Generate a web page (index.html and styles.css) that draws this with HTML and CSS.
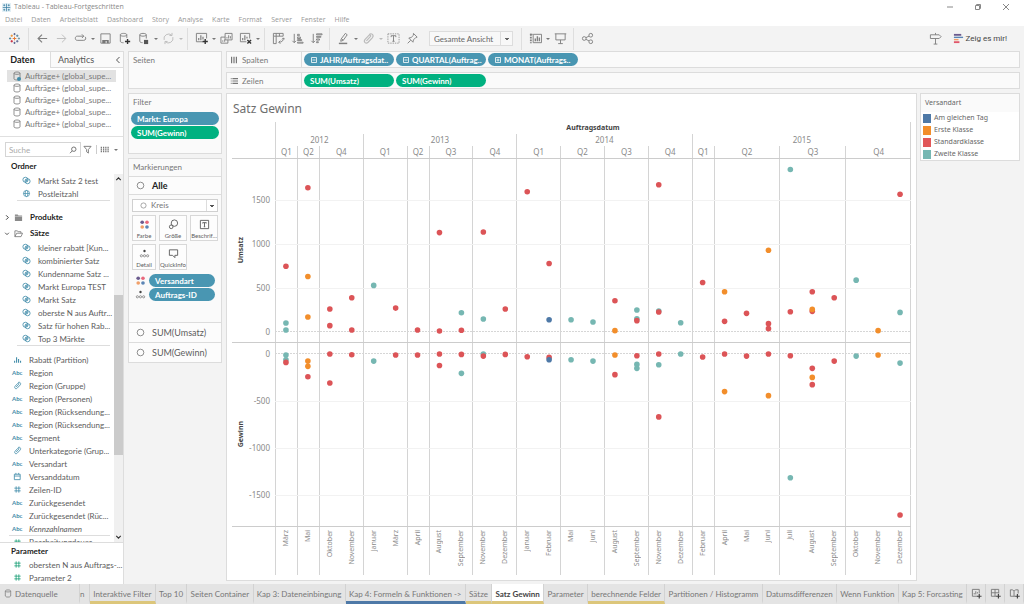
FILE: index.html
```html
<!DOCTYPE html>
<html lang="de">
<head>
<meta charset="utf-8">
<title>Tableau - Tableau-Fortgeschritten</title>
<link rel="stylesheet" href="styles.css">
</head>
<body>
<svg class="defs" aria-hidden="true">
  <symbol id="logo" viewBox="0 0 12 12"><g fill="none" stroke-width="1"><path stroke="#e8762d" d="M6 4v4M4 6h4"/><path stroke="#5b6591" d="M6 0v2.4M4.8 1.2h2.4M6 9.6V12M4.8 10.8h2.4"/><path stroke="#c72037" d="M3 7.7v2.6M1.7 9h2.6"/><path stroke="#59879b" d="M9 1.7v2.6M7.7 3h2.6M0 6h2.4M1.2 4.8v2.4"/><path stroke="#eb912c" d="M3 1.7v2.6M1.7 3h2.6"/><path stroke="#5c6692" d="M9 7.7v2.6M7.7 9h2.6"/><path stroke="#7199a6" d="M9.6 6H12M10.8 4.8v2.4"/></g></symbol>
  <symbol id="applogo" viewBox="0 0 12 12"><path fill="#e3f0f6" d="M0 0h12v12H0z"/><path fill="none" stroke="#3a7fa3" stroke-width="1" d="M6 1v10M1 6h10M3 1.700v2.600M1.700 3h2.600M9 1.700v2.600M7.700 3h2.600M3 7.700v2.600M1.700 9h2.600M9 7.700v2.600M7.700 9h2.600"/></symbol>
  <symbol id="cyl" viewBox="0 0 8 10"><path fill="none" stroke="currentColor" stroke-width=".8" d="M1 2.2c0-1.6 6-1.6 6 0v5.6c0 1.6-6 1.6-6 0zM1 2.2c0 1.5 6 1.5 6 0"/></symbol>
  <symbol id="cylon" viewBox="0 0 8 10"><path fill="none" stroke="currentColor" stroke-width=".8" d="M1 2.200c0-1.600 6-1.600 6 0v5.600c0 1.600-6 1.600-6 0zM1 2.200c0 1.500 6 1.500 6 0"/><circle cx="6" cy="8" r="2" fill="#3f8ba8"/></symbol>
  <symbol id="set" viewBox="0 0 10 10"><g fill="none" stroke="#3f8ba8" stroke-width=".9"><circle cx="3.8" cy="4.2" r="2.8"/><circle cx="6.2" cy="5.8" r="2.8"/><path d="M4 4l2 2M5 3.4l1.6 1.6M3.6 5.2l1.4 1.4"/></g></symbol>
  <symbol id="globe" viewBox="0 0 10 10"><g fill="none" stroke="#3f8ba8" stroke-width=".8"><circle cx="5" cy="5" r="3.4"/><ellipse cx="5" cy="5" rx="1.5" ry="3.4"/><path d="M1.6 5h6.8"/></g></symbol>
  <symbol id="clip" viewBox="0 0 10 10"><path fill="none" stroke="currentColor" stroke-width=".9" d="M3.4 6.8l3-3.2c.8-.8-.3-1.8-1.1-1L2.4 5.7C.8 7.6 3 9.6 4.7 7.900l3.200-3.400C9.600 2.600 7.300.2 5.500 2"/></symbol>
  <symbol id="cal" viewBox="0 0 10 10"><path fill="none" stroke="#3f8ba8" stroke-width=".9" d="M1.500 2.500h6.500v6H1.500zM1.500 4.500h6.500M3.200 1v1.500M6.300 1v1.500"/></symbol>
  <symbol id="hash" viewBox="0 0 10 10"><path fill="none" stroke="currentColor" stroke-width=".9" d="M3.500 1.500v7M6.500 1.500v7M1.500 3.500h7M1.500 6.500h7"/></symbol>
  <symbol id="bins" viewBox="0 0 10 10"><path fill="none" stroke="#3f8ba8" stroke-width="1.200" d="M1.800 6.500v2M4 2.500v6M6.200 4.500v4M8.400 6.500v2"/></symbol>
  <symbol id="folder" viewBox="0 0 10 10"><path fill="#8a8a8a" d="M1 1.800h3l1 1h4V9H1z"/><path stroke="#fff" stroke-width=".5" d="M1 3.700h8"/></symbol>
  <symbol id="folderopen" viewBox="0 0 10 10"><path fill="none" stroke="#777" stroke-width=".9" d="M1 8.500V2h2.500l1 1h3.200v1.700M1 8.500l2-3.800h6.500L7.800 8.500z"/></symbol>
  <symbol id="colors" viewBox="0 0 12 12"><circle cx="3.500" cy="3.500" r="2" fill="#6b5b8e"/><circle cx="8.700" cy="3.500" r="2" fill="#e8687c"/><circle cx="3.500" cy="8.700" r="2" fill="#f0a06a"/><circle cx="8.700" cy="8.700" r="2" fill="#5b85b5"/></symbol>
  <symbol id="detail" viewBox="0 0 12 12"><circle cx="6" cy="3.300" r="1.300" fill="#444"/><g fill="none" stroke="#666" stroke-width=".7"><circle cx="2.600" cy="8.500" r="1.200"/><circle cx="6" cy="8.500" r="1.200"/><circle cx="9.400" cy="8.500" r="1.200"/></g></symbol>
  <symbol id="ring" viewBox="0 0 10 10"><circle cx="5" cy="5" r="3.700" fill="none" stroke="#777" stroke-width=".9"/></symbol>
  <symbol id="plusbox" viewBox="0 0 8 8"><path fill="none" stroke="#fff" stroke-width=".8" d="M1.500 1.500h5v5h-5zM2.500 4h3M4 2.500v3"/></symbol>
  <symbol id="minusbox" viewBox="0 0 8 8"><path fill="none" stroke="#fff" stroke-width=".8" d="M1.500 1.500h5v5h-5zM2.500 4h3"/></symbol>
</svg>

<header class="titlebar">
  <svg class="app-icon"><use href="#applogo"/></svg>
  <h1>Tableau - Tableau-Fortgeschritten</h1>
  <div class="window-buttons">
    <button aria-label="Minimieren"><svg viewBox="0 0 8 8"><path d="M1 4h6"/></svg></button>
    <button aria-label="Verkleinern"><svg viewBox="0 0 8 8"><path d="M1.500 2.500h4v4h-4zM2.500 2.500v-1h4v4h-1"/></svg></button>
    <button aria-label="Schließen"><svg viewBox="0 0 8 8"><path d="M1 1l6 6M7 1L1 7"/></svg></button>
  </div>
</header>
<nav class="menubar">
  <a href="#">Datei</a><a href="#">Daten</a><a href="#">Arbeitsblatt</a><a href="#">Dashboard</a><a href="#">Story</a><a href="#">Analyse</a><a href="#">Karte</a><a href="#">Format</a><a href="#">Server</a><a href="#">Fenster</a><a href="#">Hilfe</a>
</nav>

<div class="toolbar">
  <button class="home" aria-label="Startseite"><svg viewBox="0 0 12 12"><use href="#logo"/></svg></button>
  <span class="sep"></span>
  <button class="tool" aria-label="Zurück"><svg viewBox="0 0 14 14"><path stroke-width="1.300" d="M12 7H2.500M6.500 2.800L2.300 7l4.200 4.200"/></svg></button>
  <button class="tool light" aria-label="Vorwärts"><svg viewBox="0 0 14 14"><path d="M2 7h9.500M7.500 2.800L11.700 7l-4.200 4.200"/></svg></button>
  <button class="tool" aria-label="Wiederholen"><svg viewBox="0 0 14 14"><path d="M10.500 4.500H3.500C.7 4.500.7 9 3.500 9h7c2.200 0 2.800-2.500 1.500-3.800M8.500 2.500l2 2-2 2"/></svg></button>
  <button class="caret" aria-label="Optionen"></button>
  <button class="tool" aria-label="Speichern"><svg viewBox="0 0 14 14"><path d="M2 2h10v10H2z"/><path fill="#777" stroke="none" d="M3.500 8.500h7v3.500h-2V10H7v2H3.500z"/></svg></button>
  <button class="tool" aria-label="Neue Datenquelle"><svg viewBox="0 0 14 14"><path d="M2.500 3c0-2 7-2 7 0v3.500M2.500 3v7c0 1 1.700 1.600 3.500 1.600M2.500 3c0 2 7 2 7 0"/><path stroke="#333" stroke-width="1.500" d="M10.300 7.500v5.500M7.500 10.200h5.600"/></svg></button>
  <button class="tool" aria-label="Updates anhalten"><svg viewBox="0 0 14 14"><path d="M3 3c0-2 7-2 7 0v4M3 3v7c0 1 1.500 1.500 3 1.500M3 3c0 2 7 2 7 0"/><path fill="#555" stroke="none" d="M7.500 8.500h4.500v4.500H7.500z"/></svg></button>
  <button class="caret" aria-label="Optionen"></button>
  <button class="tool light" aria-label="Aktualisieren"><svg viewBox="0 0 14 14"><path d="M2.300 8.500A5 5 0 0 1 10.500 3.500M11.700 5.500A5 5 0 0 1 3.500 10.500M10.800 1v2.800H8M3.200 13v-2.800H6"/></svg></button>
  <button class="caret pale" aria-label="Optionen"></button>
  <span class="sep"></span>
  <button class="tool" aria-label="Neues Arbeitsblatt"><svg viewBox="0 0 14 14"><path d="M9 10.500H1.500v-9h11V7"/><path stroke-width="1.300" d="M4 9V6.500M6.300 9V3.500M8.600 8V5"/><path stroke="#333" stroke-width="1.500" d="M11 7.500v5.500M8.200 10.200h5.600"/></svg></button>
  <button class="caret" aria-label="Optionen"></button>
  <button class="tool" aria-label="Duplizieren"><svg viewBox="0 0 14 14"><path d="M5.500 1.500h7.500v7H5.500zM5.500 5.500H1v6.500h7.500V8.500M7.500 7V5.500M9.300 7V3.500M11.200 7V4.500M3 10.500V9M5 10.500V8"/></svg></button>
  <button class="tool" aria-label="Blatt löschen"><svg viewBox="0 0 14 14"><path d="M8 10.500H1.500v-9h10V7"/><path stroke-width="1.300" d="M4 9V6.500M6.300 9V3.500M8.600 7V5"/><path stroke="#333" stroke-width="1.500" d="M9 8.500l4 4M13 8.500l-4 4"/></svg></button>
  <button class="caret" aria-label="Optionen"></button>
  <span class="sep"></span>
  <button class="tool" aria-label="Zeilen und Spalten tauschen"><svg viewBox="0 0 14 14"><path d="M1.500 1.500h10.500v3H1.500zM1.500 4.500v8h3v-8M4.500 1.500v3M8 1.500v3M12.300 6.500c0 3-1.500 4.500-5 4.500M10.800 8l1.500-1.700L13.800 8M9 9.300L7.300 11 9 12.700"/></svg></button>
  <button class="tool" aria-label="Aufsteigend sortieren"><svg viewBox="0 0 14 14"><path d="M3.500 2v9.500M1.500 9.500l2 2 2-2M7 2.500h2v1.500H7zM7 5.500h3.200V7H7zM7 8.200h4.500v1H7zM7 11h6v1H7z"/></svg></button>
  <button class="tool" aria-label="Absteigend sortieren"><svg viewBox="0 0 14 14"><path d="M3.500 2v9.500M1.500 9.500l2 2 2-2M7 2h6v1H7zM7 4.700h4.700v1H7zM7 7.500h3.200v1.200H7zM7 10.500h2v1H7z"/></svg></button>
  <span class="sep"></span>
  <button class="tool" aria-label="Hervorheben"><svg viewBox="0 0 14 14"><path d="M4.500 7.500l4.500-6 2 1.500-4.300 6-2.700 1zM5 7.500l1.800 1.300"/><path stroke-width="1.600" d="M2 12.300h9"/></svg></button>
  <button class="caret" aria-label="Optionen"></button>
  <button class="tool light" aria-label="Gruppieren"><svg viewBox="0 0 10 10"><use href="#clip"/></svg></button>
  <button class="caret pale" aria-label="Optionen"></button>
  <button class="tool" aria-label="Markierungsbeschriftungen"><svg viewBox="0 0 14 14"><path stroke-width=".8" stroke-dasharray="1.500 1" d="M1 2h12v10H1z"/><path d="M4.500 5.500V4h5v1.500M7 4v6M5.800 10h2.400"/></svg></button>
  <button class="tool" aria-label="Achsen fixieren"><svg viewBox="0 0 14 14"><path d="M8 1.500L12 5.500 10.500 6 8 8.500 7.500 11 3 6.500 5.500 6 8 3.500zM5 9L1.800 12.200"/></svg></button>
  <select class="fit" aria-label="Anpassen"><option>Gesamte Ansicht</option></select>
  <span class="sep"></span>
  <button class="tool" aria-label="Container anzeigen"><svg viewBox="0 0 14 14"><path stroke-dasharray="2 1" stroke-width="2" d="M2 2v10"/><path d="M4.500 2.500h9v9h-9zM4 2.500H1"/><path stroke-width="1.500" d="M6.800 10V7M9 10V4.500M11.200 10V6"/></svg></button>
  <button class="caret" aria-label="Optionen"></button>
  <button class="tool" aria-label="Präsentation"><svg viewBox="0 0 14 14"><path d="M.8 2h12.400M2 2v6.500h10V2M7 8.500v4M4.500 12.500h5"/></svg></button>
  <span class="sep"></span>
  <button class="tool" aria-label="Teilen"><svg viewBox="0 0 14 14"><circle cx="3.500" cy="7" r="2"/><circle cx="10.500" cy="3.500" r="2"/><circle cx="10.500" cy="10.500" r="2"/><path d="M5.300 6.100l3.400-1.700M5.300 7.900l3.400 1.700"/></svg></button>
  <button class="tool guide" aria-label="Datenleitfaden"><svg viewBox="0 0 14 14"><path d="M1.500 3h9.500l2 2-2 2H1.500zM7 1v2M7 7v6M5 13h4"/></svg></button>
  <button class="showme"><svg viewBox="0 0 12 12"><path fill="#6b5b8e" d="M1 1h8v2H1z"/><path fill="#5b85b5" d="M1 4h10v1.500H1z"/><path fill="#f0a06a" d="M1 6.500h5V8H1z"/><path fill="#e0566a" d="M1 9h6v2H1z"/></svg>Zeig es mir!</button>
</div>

<main class="workspace">
  <aside class="data-pane">
    <div class="pane-tabs">
      <button class="active">Daten</button>
      <button class="second">Analytics <svg viewBox="0 0 6 8"><path d="M4.500 1l-3 3 3 3"/></svg></button>
    </div>
    <ul class="sources">
      <li class="selected"><svg><use href="#cylon"/></svg>Aufträge+ (global_supe...</li>
      <li><svg><use href="#cyl"/></svg>Aufträge+ (global_supe...</li>
      <li><svg><use href="#cyl"/></svg>Aufträge+ (global_supe...</li>
      <li><svg><use href="#cyl"/></svg>Aufträge+ (global_supe...</li>
      <li><svg><use href="#cyl"/></svg>Aufträge+ (global_supe...</li>
    </ul>
    <div class="search-row">
      <div class="search"><input type="text" placeholder="Suche" aria-label="Suche"><svg viewBox="0 0 8 8"><circle cx="4.800" cy="3.200" r="2.200"/><path d="M3.300 4.800L1 7.200"/></svg></div>
      <button class="plain" aria-label="Filtern"><svg viewBox="0 0 10 10"><path d="M1 1.500h8L6 5v4L4 7.500V5z"/></svg></button>
      <button class="plain view-toggle" aria-label="Ansicht"><svg viewBox="0 0 10 10"><path stroke-width="1.400" d="M1.500 2v6M4 2v6M6.500 2v6M9 2v6"/><path stroke="#fff" stroke-width=".5" d="M0 4h10M0 6h10"/></svg></button>
      <button class="caret" aria-label="Optionen"></button>
    </div>
    <h2>Ordner</h2>
    <div class="field-scroll">
      <div class="fields">
        <ul class="nested">
          <li><svg><use href="#set"/></svg>Markt Satz 2 test</li>
          <li><svg><use href="#globe"/></svg>Postleitzahl</li>
        </ul>
        <div class="folder gap"><svg class="tw" viewBox="0 0 6 8"><path d="M2 1.500L4.500 4 2 6.500"/></svg><svg><use href="#folder"/></svg>Produkte</div>
        <div class="folder"><svg class="tw" viewBox="0 0 8 6"><path d="M1.500 2L4 4.500 6.500 2"/></svg><svg><use href="#folderopen"/></svg>Sätze</div>
        <ul class="nested">
          <li><svg><use href="#set"/></svg>kleiner rabatt [Kun...</li>
          <li><svg><use href="#set"/></svg>kombinierter Satz</li>
          <li><svg><use href="#set"/></svg>Kundenname Satz ...</li>
          <li><svg><use href="#set"/></svg>Markt Europa TEST</li>
          <li><svg><use href="#set"/></svg>Markt Satz</li>
          <li><svg><use href="#set"/></svg>oberste N aus Auftr...</li>
          <li><svg><use href="#set"/></svg>Satz für hohen Rab...</li>
          <li><svg><use href="#set"/></svg>Top 3 Märkte</li>
        </ul>
        <ul class="flat">
          <li><svg><use href="#bins"/></svg>Rabatt (Partition)</li>
          <li><b>Abc</b>Region</li>
          <li><svg><use href="#clip"/></svg>Region (Gruppe)</li>
          <li><b>Abc</b>Region (Personen)</li>
          <li><b>Abc</b>Region (Rücksendung...</li>
          <li><b>Abc</b>Region (Rücksendung...</li>
          <li><b>Abc</b>Segment</li>
          <li><svg><use href="#clip"/></svg>Unterkategorie (Grup...</li>
          <li><b>Abc</b>Versandart</li>
          <li><svg><use href="#cal"/></svg>Versanddatum</li>
          <li><svg><use href="#hash"/></svg>Zeilen-ID</li>
          <li><b>Abc</b>Zurückgesendet</li>
          <li><b>Abc</b>Zurückgesendet (Rüc...</li>
          <li><b>Abc</b><i>Kennzahlnamen</i></li>
        </ul>
        <ul class="flat measures"><li><svg><use href="#hash"/></svg>Bearbeitungdauer</li></ul>
      </div>
      <div class="scrollbar">
        <svg viewBox="0 0 8 8"><path d="M2 5l2-2 2 2"/></svg>
        <div class="track"><div class="thumb"></div></div>
        <svg viewBox="0 0 8 8"><path d="M2 3l2 2 2-2"/></svg>
      </div>
    </div>
    <section class="parameters">
      <h2>Parameter</h2>
      <ul class="flat measures">
        <li><svg><use href="#hash"/></svg>obersten N aus Auftrags-...</li>
        <li><svg><use href="#hash"/></svg>Parameter 2</li>
      </ul>
    </section>
  </aside>

  <div class="cards">
    <section class="card pages"><h3>Seiten</h3></section>
    <section class="card filters"><h3>Filter</h3>
      <div class="pill blue">Markt: Europa</div>
      <div class="pill green">SUM(Gewinn)</div>
    </section>
    <section class="card marks"><h3>Markierungen</h3>
      <div class="mark-row all"><svg><use href="#ring"/></svg>Alle</div>
      <div class="mark-body">
        <div class="mark-type"><svg><use href="#ring"/></svg><select aria-label="Markierungstyp"><option>Kreis</option></select></div>
        <div class="mark-buttons">
          <button><svg viewBox="0 0 12 12"><use href="#colors"/></svg>Farbe</button>
          <button><svg viewBox="0 0 12 12"><circle cx="7" cy="4.500" r="3.500"/><circle cx="3.500" cy="8.500" r="2"/></svg>Größe</button>
          <button><svg viewBox="0 0 12 12"><path d="M1.500 1.500h9v9h-9zM4 4.800V4h4v.8M6 4v4.500M5.200 8.500h1.600"/></svg>Beschrif...</button>
          <button><svg viewBox="0 0 12 12"><use href="#detail"/></svg>Detail</button>
          <button><svg viewBox="0 0 12 12"><path d="M1.500 2h9v6H7.500v2.500L5 8H1.500z"/></svg>QuickInfo</button>
        </div>
        <div class="encoding"><svg><use href="#colors"/></svg><div class="pill blue">Versandart</div></div>
        <div class="encoding"><svg><use href="#detail"/></svg><div class="pill blue">Auftrags-ID</div></div>
      </div>
      <div class="mark-row"><svg><use href="#ring"/></svg>SUM(Umsatz)</div>
      <div class="mark-row"><svg><use href="#ring"/></svg>SUM(Gewinn)</div>
    </section>
  </div>

  <div class="canvas">
    <div class="shelf"><div class="shelf-name"><svg viewBox="0 0 10 10"><path d="M2 1v8M5 1v8M8 1v8"/></svg>Spalten</div>
      <div class="pill blue"><svg><use href="#minusbox"/></svg>JAHR(Auftragsdat..</div>
      <div class="pill blue"><svg><use href="#minusbox"/></svg>QUARTAL(Auftrag..</div>
      <div class="pill blue"><svg><use href="#plusbox"/></svg>MONAT(Auftrags..</div>
    </div>
    <div class="shelf"><div class="shelf-name"><svg viewBox="0 0 10 10"><path d="M3 2h7M3 5h7M3 8h7M1 2h1M1 5h1M1 8h1"/></svg>Zeilen</div>
      <div class="pill green">SUM(Umsatz)</div>
      <div class="pill green">SUM(Gewinn)</div>
    </div>
    <div class="sheet">
      <section class="view">
        <h2>Satz Gewinn</h2>
        <div class="plot" id="plot"></div>
      </section>
      <section class="legend">
        <h3>Versandart</h3>
        <ul>
          <li><span class="swatch same-day"></span>Am gleichen Tag</li>
          <li><span class="swatch first"></span>Erste Klasse</li>
          <li><span class="swatch standard"></span>Standardklasse</li>
          <li><span class="swatch second-class"></span>Zweite Klasse</li>
        </ul>
      </section>
    </div>
  </div>
</main>

<footer class="sheet-tabs">
  <button class="source"><svg><use href="#cyl"/></svg>Datenquelle</button>
  <button class="cut"><span>n</span></button>
  <button class="yellow">Interaktive Filter</button>
  <button>Top 10</button>
  <button>Seiten Container</button>
  <button>Kap 3: Dateneinbingung</button>
  <button class="navy">Kap 4: Formeln &amp; Funktionen -&gt;</button>
  <button class="yellow">Sätze</button>
  <button class="yellow current">Satz Gewinn</button>
  <button>Parameter</button>
  <button class="yellow">berechnende Felder</button>
  <button>Partitionen / Histogramm</button>
  <button>Datumsdifferenzen</button>
  <button>Wenn Funktion</button>
  <button>Kap 5: Forcasting</button>
  <button class="new" aria-label="Neues Arbeitsblatt"><svg viewBox="0 0 12 12"><path d="M7 9H1.500V1.500H9V6M3.500 7V5.500M5.200 7V3.500M7 6V4.500"/><path stroke="#444" stroke-width="1.300" d="M9 6.500v5M6.500 9h5"/></svg></button>
  <button class="new" aria-label="Neues Dashboard"><svg viewBox="0 0 12 12"><path d="M7 9H1.500V1.500H9.500V6M5.500 1.500V9M1.500 5.200h8"/><path stroke="#444" stroke-width="1.300" d="M9.200 6.500v5M6.700 9h5"/></svg></button>
  <button class="new" aria-label="Neue Story"><svg viewBox="0 0 12 12"><path d="M6.500 9H1.500V2h2.500L5.500 3.500 7 2h3v4M5.500 3.500V9"/><path stroke="#444" stroke-width="1.300" d="M9.200 6.500v5M6.700 9h5"/></svg></button>
</footer>
<script src="chart.js"></script>
</body>
</html>
```
FILE: styles.css
```css
* { box-sizing: border-box; }
body { margin: 0; height: 100vh; display: flex; flex-direction: column; overflow: hidden; background: #f3f3f3; color: #5c5c5c; font: 8px/12px Lato, "Open Sans", sans-serif; }
button, select, input { font: inherit; color: inherit; border: 0; background: none; padding: 0; margin: 0; }
h1, h2, h3, ul { margin: 0; padding: 0; font: inherit; }
ul { list-style: none; }
svg { fill: none; stroke: currentColor; flex: none; }
svg use { stroke: none; }
.defs { display: none; }

.titlebar { display: flex; align-items: center; height: 14px; padding: 0 4px 0 2px; background: #fff; color: #888; font: 7px/12px "Open Sans", sans-serif; }
.app-icon { width: 9px; height: 9px; margin-right: 3px; }
.window-buttons { display: flex; margin-left: auto; }
.window-buttons button { width: 28px; display: flex; justify-content: center; }
.window-buttons svg { width: 8px; height: 8px; stroke: #888; }
.window-buttons { padding-right: 0; }
.menubar { display: flex; gap: 9px; height: 12px; padding-left: 5px; background: #fff; font: 7px/12px "Open Sans", sans-serif; }
.menubar a { color: #999; text-decoration: none; }

.toolbar { display: flex; align-items: center; height: 25px; color: #808080; }
.toolbar svg { width: 13px; height: 13px; display: block; }
.home { width: 28px; display: flex; justify-content: center; }
.toolbar .home svg { width: 11px; height: 11px; }
.sep { width: 1px; height: 22px; margin: 0 4px 0 3px; background: #dedede; }
.home + .sep { margin-left: 0; }
.tool { width: 19px; display: flex; justify-content: center; }
.light { color: #bbb; }
.caret { width: 6px; height: 12px; display: flex; align-items: center; justify-content: center; color: #777; }
.caret::before { content: ""; border: 2px solid transparent; border-top-color: currentColor; border-bottom: 0; }
.pale { color: #bbb; }
.fit { appearance: none; width: 84px; height: 15px; margin: 0 5px 0 7px; padding: 0 4px; border: 1px solid #ddd; line-height: 12px; color: #666; background: linear-gradient(#666, #666) no-repeat right 3px top 6px / 4px 1px, linear-gradient(#666, #666) no-repeat right 4px top 7px / 2px 1px, linear-gradient(#ddd, #ddd) no-repeat right 11px center / 1px 100%, #f8f8f8; }
.guide { margin-left: auto; }
.showme { display: flex; align-items: center; gap: 2px; margin: 0 17px 0 8px; color: #444; font: 8px/12px Roboto, sans-serif; }
.toolbar .showme svg { width: 11px; height: 11px; stroke: none; }

.workspace { flex: 1; min-height: 0; display: grid; grid-template-columns: 124px 94px 1fr; column-gap: 4px; padding-right: 4px; }
.data-pane { display: flex; flex-direction: column; min-height: 0; min-width: 0; background: #fff; border-right: 1px solid #ddd; white-space: nowrap; }
.pane-tabs { display: flex; height: 17px; font-size: 9px; }
.pane-tabs button { width: 50px; border-top: 1px solid #ddd; color: #555; }
.pane-tabs .active { font-weight: bold; color: #222; padding-right: 5px; }
.pane-tabs .second { flex: 1; display: flex; align-items: center; justify-content: space-between; padding: 0 2px 0 7px; border: solid #ddd; border-width: 1px 0 1px 1px; background: #fafafa; }
.pane-tabs svg { width: 6px; height: 8px; }
.sources { padding: 2px 7px 6px; border-bottom: 1px solid #e0e0e0; }
.sources li { display: flex; align-items: center; gap: 4px; height: 12px; padding-left: 6px; color: #777; }
.sources svg { width: 8px; height: 10px; }
.sources .selected { background: #e2e2e2; }
.search-row { display: flex; align-items: center; padding: 5px 5px 3px; color: #777; }
.search { width: 76px; height: 15px; display: flex; align-items: center; border: 1px solid #d5d5d5; padding: 0 3px; }
.search input { flex: 1; min-width: 0; outline: 0; }
.search input::placeholder { color: #aaa; }
.search svg { width: 8px; height: 8px; }
.plain { display: flex; padding: 0 2px; }
.plain svg { width: 9px; height: 9px; }
.view-toggle { border-left: 1px solid #ccc; margin-left: 2px; padding-left: 3px; }
.search-row .caret { margin-left: 2px; }
.data-pane h2 { padding-left: 11px; font-weight: bold; font-size: 8px; color: #222; }
.field-scroll { flex: 1; min-height: 0; display: flex; margin-top: 2px; border-bottom: 1px solid #ddd; }
.fields { flex: 1; min-width: 0; overflow: hidden; }
.fields li, .parameters li { display: flex; align-items: center; height: 13px; }
.fields svg, .parameters svg { width: 9px; height: 9px; }
.nested { margin: 0 4px 0 17px; padding-left: 5px; border-bottom: 1px solid #ddd; }
.nested li { gap: 7px; }
.folder { display: flex; align-items: center; gap: 4px; height: 16px; font-weight: bold; color: #222; padding-left: 4px; }
.folder svg + svg { margin-right: 3px; }
.folder .tw { width: 6px; height: 7px; }
.gap { margin-top: 8px; }
.flat { margin-top: 7px; }
.flat svg, .flat b { width: 11px; margin: 0 6px 0 12px; color: #3f8ba8; }
.flat b { font-size: 6px; }
.measures { margin: 0 4px 0 9px; padding: 0; border-top: 1px solid #ddd; }
.fields .measures li { margin-left: -9px; height: 12px; }
.measures svg { color: #1b9e77; }
.scrollbar { width: 9px; display: flex; flex-direction: column; align-items: center; background: #f0f0f0; color: #333; }
.scrollbar svg { width: 9px; height: 10px; }
.track { flex: 1; width: 100%; display: flex; flex-direction: column; }
.track::before { content: ""; flex: 0 0 32%; }
.thumb { height: 46%; width: 100%; background: #cbcbcb; }
.parameters { padding: 2px 0 0; }
.parameters .measures { margin: 1px 0 0; border: 0; }

.cards { display: flex; flex-direction: column; gap: 4px; }
.card { border: 1px solid #dcdcdc; background: #fafafa; }
.card h3 { padding: 2px 4px; line-height: 13px; color: #777; }
.pages { height: 38px; }
.filters { height: 61px; }
.pill { display: flex; align-items: center; gap: 2px; height: 13px; padding: 0 6px; border-radius: 7px; color: #fff; font-weight: bold; white-space: nowrap; overflow: hidden; }
.pill svg { width: 8px; height: 8px; }
.blue { background: #4996b2; }
.green { background: #00b180; }
.filters .pill { margin: 1px 2px; }
.mark-row { display: flex; align-items: center; gap: 7px; height: 20px; padding-left: 7px; border-top: 1px solid #dcdcdc; font-size: 9px; background: #fcfcfc; }
.mark-row svg { width: 9px; height: 9px; }
.all { height: 18px; font-weight: bold; color: #222; }
.mark-body { min-height: 128px; padding: 4px 3px 0; border-top: 1px solid #dcdcdc; }
.mark-type { display: flex; align-items: center; gap: 4px; height: 13px; padding-left: 7px; border: 1px solid #d0d0d0; margin-bottom: 3px; background: #fff; }
.mark-type svg { width: 7px; height: 7px; }
.mark-type select { appearance: none; flex: 1; height: 11px; line-height: 11px; color: #777; background: linear-gradient(#555, #555) no-repeat right 3px top 5px / 4px 1px, linear-gradient(#555, #555) no-repeat right 4px top 6px / 2px 1px, linear-gradient(#ddd, #ddd) no-repeat right 10px top / 1px 100%; }
.mark-buttons { display: grid; grid-template-columns: 24px 28px 28px; justify-content: space-between; gap: 3px; margin-bottom: 4px; }
.mark-buttons button { height: 26px; display: flex; flex-direction: column; align-items: center; justify-content: space-between; padding-top: 3px; border: 1px solid #d8d8d8; background: #fdfdfd; font: 6px/8px Lato, sans-serif; overflow: hidden; }
.mark-buttons svg { width: 11px; height: 11px; }
.encoding { display: flex; gap: 3px; margin: 0 3px 1px; align-items: center; }
.encoding svg { width: 11px; height: 11px; }
.encoding .pill { flex: 1; }

.canvas { display: flex; flex-direction: column; gap: 4px; min-width: 0; min-height: 0; padding-bottom: 3px; }
.shelf { display: flex; align-items: center; gap: 2px; height: 17px; border: 1px solid #dcdcdc; background: #fafafa; }
.shelf-name { display: flex; align-items: center; align-self: stretch; gap: 4px; width: 75px; padding-left: 3px; border-right: 1px solid #dcdcdc; color: #777; }
.shelf-name svg { width: 8px; height: 8px; stroke-width: 1.5; }
.shelf .pill { width: 90px; }
.sheet { flex: 1; min-height: 0; display: grid; grid-template-columns: 1fr 100px; gap: 3px; align-items: start; }
.view { height: 100%; display: flex; flex-direction: column; min-width: 0; padding: 5px; background: #fff; border: 1px solid #dcdcdc; }
.view h2 { margin-bottom: 3px; padding-left: 1px; font: 12px/20px "Noto Sans", sans-serif; color: #6e6e6e; }
.legend { border: 1px solid #dcdcdc; background: #fff; color: #666; font: 7px/12px "Noto Sans", sans-serif; }
.legend h3 { padding: 3px 4px; background: #fafafa; }
.legend li { display: flex; align-items: center; gap: 3px; height: 12px; padding-left: 2px; }
.swatch { width: 8px; height: 9px; }
.same-day { background: #4e79a7; }
.first { background: #f28e2b; }
.standard { background: #e15759; }
.second-class { background: #76b7b2; }

.plot { flex: 1; min-height: 0; display: grid; grid-template-columns: 43px repeat(29, minmax(0, 1fr)); grid-template-rows: 12px 12px 12px minmax(0, 1fr) minmax(0, 1fr) 49px; font: 7px/12px "Noto Sans", sans-serif; color: #8a8a8a; }
.span-title, .year, .quarter { text-align: center; border-left: 1px solid #d4d4d4; }
.year, .quarter { font-size: 8px; }
.span-title { grid-area: 1 / 2 / 7 / 31; border-right: 1px solid #d4d4d4; color: #444; font-weight: bold; }
.year { grid-row: 2 / 4; }
.quarter { grid-row: 3 / 7; }
.axis { grid-column: 1; display: flex; align-items: center; border-top: 1px solid #ccc; }
.axis b { width: 18px; writing-mode: vertical-rl; transform: rotate(180deg); text-align: center; line-height: 18px; color: #444; }
.axis svg { flex: 1; width: 0; height: 100%; overflow: visible; stroke: none; fill: #8a8a8a; font-size: 8px; text-anchor: end; }
.marks-pane { grid-column: 2 / 31; width: 100%; height: 100%; border-top: 1px solid #ccc; stroke: none; overflow: hidden; }
.grid-line { stroke: #f2f2f2; shape-rendering: crispEdges; }
.zero { stroke: #d6d6d6; stroke-dasharray: 2 1; }
.m0 { fill: #4e79a7; }
.m1 { fill: #f28e2b; }
.m2 { fill: #dc5457; }
.m3 { fill: #76b7b2; }
.corner { grid-area: 6 / 1; border-top: 1px solid #ccc; }
.month { grid-row: 6; display: flex; justify-content: center; padding-top: 3px; border-top: 1px solid #ccc; }
.month span { writing-mode: vertical-rl; transform: rotate(180deg); height: max-content; }

.sheet-tabs { display: flex; height: 20px; background: #e4e4e4; color: #777; }
.sheet-tabs button { flex: 1 1 auto; border-right: 1px solid #d2d2d2; border-bottom: 3px solid transparent; padding-top: 2px; white-space: nowrap; }
.sheet-tabs .source { flex: 0 0 80px; display: flex; align-items: center; gap: 3px; padding-left: 4px; }
.source svg { width: 8px; height: 9px; }
.sheet-tabs .cut { flex: 0 0 10px; text-align: left; }
.sheet-tabs .yellow { border-bottom-color: #dcc67a; }
.sheet-tabs .navy { border-bottom-color: #4e79a7; }
.sheet-tabs .current { background: #fff; color: #444; font-weight: bold; }
.sheet-tabs .new { flex: 0 0 19px; display: flex; align-items: center; justify-content: center; color: #777; }
.new svg { width: 11px; height: 11px; }
```
FILE: chart.js
```js
const years = [
  ["2012", [["Q1", ["März"]], ["Q2", ["Mai"]], ["Q4", ["Oktober", "November"]]]],
  ["2013", [["Q1", ["Januar", "März"]], ["Q2", ["April"]], ["Q3", ["August", "September"]], ["Q4", ["November", "Dezember"]]]],
  ["2014", [["Q1", ["Januar", "Februar"]], ["Q2", ["Mai", "Juni"]], ["Q3", ["August", "September"]], ["Q4", ["November", "Dezember"]]]],
  ["2015", [["Q1", ["Februar"]], ["Q2", ["April", "Mai", "Juni"]], ["Q3", ["Juli", "August", "September"]], ["Q4", ["Oktober", "November", "Dezember"]]]]
];
const B = 0, O = 1, R = 2, T = 3;
// Each entry holds [class, value] pairs for one month column.
const panes = [
  { title: "Umsatz", max: 1969, min: -114, ticks: [1500, 1000, 500, 0], data: [
    [[R, 749], [T, 102], [T, 23]], [[R, 1642], [O, 632], [O, 170]], [[R, 261], [R, 72]], [[R, 390], [R, 23]],
    [[T, 530]], [[R, 272]], [[R, 23]], [[R, 1131], [R, 11]], [[T, 219], [R, 19]], [[R, 1139], [T, 148]], [[R, 261]],
    [[R, 1597]], [[R, 779], [B, 140]], [[T, 140]], [[T, 113]], [[R, 356], [O, 15]], [[T, 250], [T, 151], [R, 129]],
    [[R, 1676], [T, 238], [R, 227]], [[T, 106]], [[R, 564]], [[O, 458], [R, 121]], [[R, 212]],
    [[O, 931], [R, 95], [R, 38]], [[T, 1850], [R, 231]], [[R, 458], [R, 235], [O, 257]], [[R, 390]],
    [[T, 590]], [[O, 15]], [[R, 1567], [T, 223]]] },
  { title: "Gewinn", max: 116, min: -1826, ticks: [0, -500, -1000, -1500], data: [
    [[T, -12], [T, -62], [R, -90]], [[O, -76], [O, -132], [R, -242]], [[R, 0], [R, -309]], [[R, -9]],
    [[T, -76]], [[R, -12]], [[R, -12]], [[R, 0], [R, -122]], [[R, -5], [T, -206]], [[T, 0], [R, -23]], [[R, -5]],
    [[R, -30]], [[R, -37], [B, -62]], [[T, -62]], [[T, -76]], [[O, -12], [R, -220]], [[R, -19], [T, -111], [T, -153]],
    [[R, 0], [T, -115], [R, -668]], [[T, 0]], [[R, -33]], [[R, 0], [O, -400]], [[R, -23]],
    [[R, 0], [O, -443]], [[R, -19], [T, -1314]], [[R, -153], [O, -249], [R, -326]], [[R, -76]],
    [[T, -23]], [[O, -12]], [[T, -97], [R, -1709]]] }
];

let html = '<div class="span-title">Auftragsdatum</div>';
let col = 2;
for (const [year, quarters] of years) {
  const start = col;
  for (const [quarter, months] of quarters) {
    html += `<div class="quarter" style="grid-column:${col} / span ${months.length}">${quarter}</div>`;
    for (const month of months) html += `<div class="month" style="grid-column:${col++}"><span>${month}</span></div>`;
  }
  html += `<div class="year" style="grid-column:${start} / ${col}">${year}</div>`;
}
html += '<div class="corner"></div>';
panes.forEach((pane, i) => {
  const y = v => (100 * (pane.max - v) / (pane.max - pane.min)).toFixed(2) + "%";
  const ticks = pane.ticks.map(t => `<text x="100%" dx="-5" y="${y(t)}" dy="3">${t}</text>`).join("");
  const lines = pane.ticks.map(t => `<line class="grid-line${t ? "" : " zero"}" x1="0" x2="100%" y1="${y(t)}" y2="${y(t)}"/>`).join("");
  const dots = pane.data.map((marks, m) => marks.map(([k, v]) =>
    `<circle class="m${k}" cx="${(100 * (m + 0.5) / pane.data.length).toFixed(2)}%" cy="${y(v)}" r="2.8"/>`).join("")).join("");
  html += `<div class="axis" style="grid-row:${i + 4}"><b>${pane.title}</b><svg>${ticks}</svg></div>`;
  html += `<svg class="marks-pane" style="grid-row:${i + 4}">${lines}${dots}</svg>`;
});
document.getElementById("plot").innerHTML = html;
```
